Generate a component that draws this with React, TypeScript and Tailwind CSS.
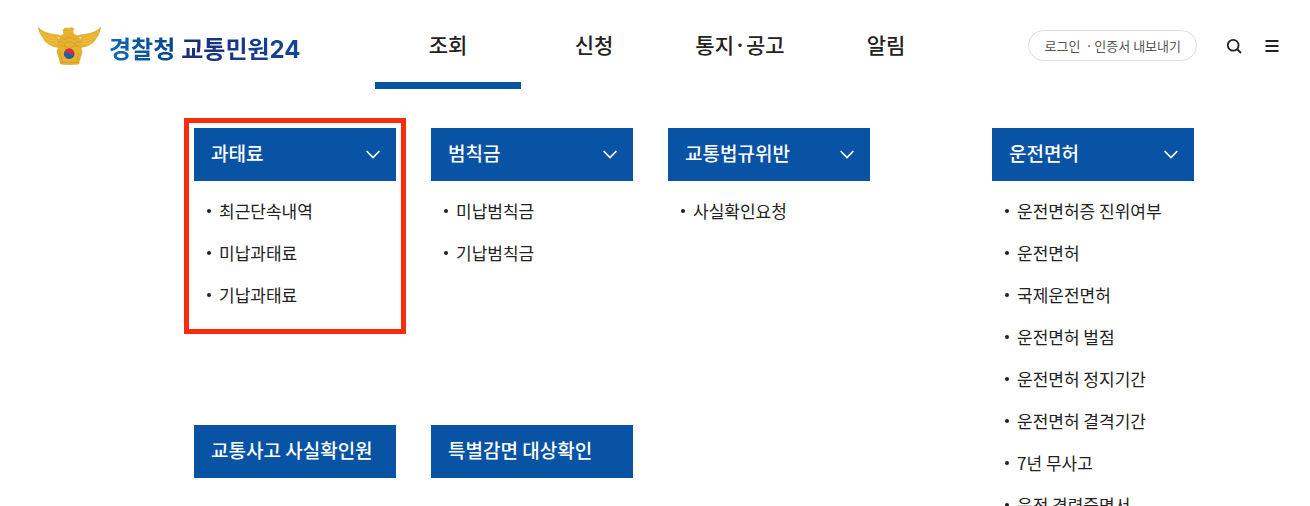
import React from "react";

type MenuGroup = {
  title: string;
  items: string[];
  active?: boolean;
};

const tabs = ["조회", "신청", "통지·공고", "알림"];

const groups: MenuGroup[] = [
  { title: "과태료", items: ["최근단속내역", "미납과태료", "기납과태료"], active: true },
  { title: "범칙금", items: ["미납범칙금", "기납범칙금"] },
  { title: "교통법규위반", items: ["사실확인요청"] },
];

const license: MenuGroup = {
  title: "운전면허",
  items: [
    "운전면허증 진위여부",
    "운전면허",
    "국제운전면허",
    "운전면허 벌점",
    "운전면허 정지기간",
    "운전면허 결격기간",
    "7년 무사고",
    "운전 경력증명서",
  ],
};

const shortcuts = ["교통사고 사실확인원", "특별감면 대상확인"];

function Emblem() {
  return (
    <svg viewBox="0 0 190 115" className="h-[38px] w-[63px] shrink-0" aria-hidden="true">
      <path
        d="M1 2 C10 12 24 18 40 21 C52 23 62 23 68 27 L77 22 C79 16 76 13 75 9 L79 5 C84 2 91 5 97 3 C102 1 106 3 109 7 L106 10 C104 14 106 19 109 22 L119 27 C127 23 138 23 150 21 C166 18 180 12 189 1 C187 14 183 24 177 32 C172 42 164 50 155 54 C147 59 137 61 129 62 L133 75 C130 87 126 98 123 112 C104 114 86 114 68 112 C65 98 61 87 57 75 L62 62 C52 61 42 58 34 53 C25 48 18 40 14 31 C7 22 3 13 1 2 Z"
        fill="#e8b32c"
        stroke="#d0a035"
        strokeWidth="2"
        strokeLinejoin="round"
      />
      <path
        d="M8 16 C20 27 36 32 54 35 M15 29 C27 38 42 42 57 43 M27 44 C38 50 49 51 61 50 M182 16 C170 27 154 32 136 35 M175 29 C163 38 148 42 133 43 M163 44 C152 50 141 51 129 50"
        fill="none"
        stroke="#efc244"
        strokeWidth="3"
      />
      <path
        d="M57 35 C66 27 74 31 79 39 C84 29 104 29 110 39 C117 29 126 29 134 36 M58 49 C66 40 75 43 80 53 C86 42 104 42 110 53 C117 41 125 42 133 49 M66 62 C72 53 82 57 94 65 C106 57 118 53 125 62 M66 77 L74 106 M124 77 L116 106 M69 107 L122 107"
        fill="none"
        stroke="#c8942f"
        strokeWidth="2"
      />
      <path d="M56 31 L67 31 L62 37 Z M122 31 L133 31 L128 37 Z" fill="#f8e7b8" />
      <circle cx="94" cy="80" r="16" fill="#d72c3b" />
      <path d="M78 80 A16 16 0 0 0 110 80 C106 85 98 86 94 80 C90 74 82 74 78 80 Z" fill="#1764ae" />
    </svg>
  );
}

function ItemList({ items }: { items: string[] }) {
  return (
    <ul className="pt-[9px] pb-2 pl-[13px]">
      {items.map((item) => (
        <li key={item} className="flex h-[42px] items-center gap-2">
          <span className="size-1 shrink-0 rounded-full bg-[#222]" />
          <a href="#" className="text-[17px] leading-6 whitespace-nowrap text-[#222]">
            {item}
          </a>
        </li>
      ))}
    </ul>
  );
}

function Group({ title, items, active }: MenuGroup) {
  return (
    <div className="relative">
      <button type="button" className="flex h-[53px] w-full cursor-pointer items-center justify-between bg-[#0853a4] pr-4 pl-[17px] text-white">
        <span className="pb-1 text-[19px] leading-6 font-medium whitespace-nowrap">{title}</span>
        <svg viewBox="0 0 14 9" className="h-[9px] w-[14px]" fill="none" stroke="currentColor" strokeWidth="1.6" aria-hidden="true">
          <path d="M0.6 1 L7 7.6 L13.4 1" />
        </svg>
      </button>
      <ItemList items={items} />
      {active && <div className="pointer-events-none absolute -inset-[10px] border-[5px] border-[#f92c0b]" />}
    </div>
  );
}

export default function App() {
  return (
    <div className="h-screen overflow-hidden bg-white font-['Noto_Sans_CJK_KR',sans-serif] text-[#222]">
      <header className="flex h-[89px] items-stretch pr-[31px] pl-[38px]">
        <a href="#" className="flex w-[337px] shrink-0 items-start gap-2 pt-[27px]">
          <Emblem />
          <span className="flex gap-[6px] pt-[3px] text-[24px] leading-9 font-bold whitespace-nowrap">
            <span className="bg-linear-to-r from-[#126bb3] to-[#08438e] bg-clip-text text-transparent">경찰청</span>
            <span className="bg-linear-to-r from-[#1c2c78] to-[#0f479b] bg-clip-text text-transparent">
              교통민원<span className="font-['Inter',sans-serif]">24</span>
            </span>
          </span>
        </a>

        <nav className="flex">
          {tabs.map((tab, i) => (
            <a
              key={tab}
              href="#"
              className={`flex w-[146px] items-start justify-center border-b-[7px] pt-7 text-[21px] leading-8 font-medium whitespace-nowrap ${
                i === 0 ? "border-[#0853a4]" : "border-transparent"
              }`}
            >
              {tab}
            </a>
          ))}
        </nav>

        <div className="mt-[30px] ml-auto flex h-[31px] items-center self-start">
          <div className="flex h-[31px] items-center rounded-full border border-[#dcdde3] px-[15px] text-[13px] leading-5 whitespace-nowrap text-[#555]">
            <a href="#">로그인</a>
            <span className="mr-1 ml-2 size-[2px] rounded-full bg-[#777]" />
            <a href="#">인증서 내보내기</a>
          </div>
          <button type="button" aria-label="검색" className="ml-[29px] cursor-pointer">
            <svg viewBox="0 0 16 16" className="size-4" fill="none" stroke="#222" strokeWidth="1.8" aria-hidden="true">
              <circle cx="7.2" cy="7.2" r="5.4" />
              <path d="M11 11 L15 15" strokeWidth="2" />
            </svg>
          </button>
          <button type="button" aria-label="전체메뉴" className="ml-[23px] cursor-pointer">
            <svg viewBox="0 0 14 14" className="size-[14px]" stroke="#222" strokeWidth="1.8" aria-hidden="true">
              <path d="M0.5 2 H13.5 M0.5 7 H13.5 M0.5 12 H13.5" />
            </svg>
          </button>
        </div>
      </header>

      <main className="flex items-start justify-between pt-[39px] pr-[116px] pl-[194px]">
        <div className="grid grid-cols-[repeat(3,202px)] gap-x-[35px] gap-y-[101px]">
          {groups.map((group) => (
            <Group key={group.title} {...group} />
          ))}
          {shortcuts.map((label) => (
            <a
              key={label}
              href="#"
              className="flex h-[53px] items-center bg-[#0853a4] pb-1 pl-[17px] text-[19px] leading-6 font-medium whitespace-nowrap text-white"
            >
              {label}
            </a>
          ))}
        </div>
        <div className="w-[202px] shrink-0">
          <Group {...license} />
        </div>
      </main>
    </div>
  );
}
